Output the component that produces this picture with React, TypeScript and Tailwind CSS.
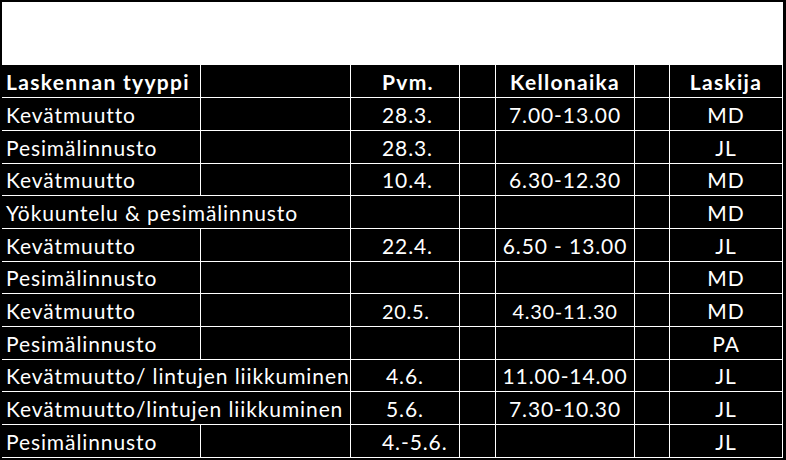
type Row = {
  h: string;
  cells: string[];
  span?: boolean;
  bold?: boolean;
  small?: boolean;
  pvmPad?: string;
};

const rows: Row[] = [
  { h: "h-[33px]", cells: ["Laskennan tyyppi", "Pvm.", "Kellonaika", "Laskija"], bold: true },
  { h: "h-[33px]", cells: ["Kevätmuutto", "28.3.", "7.00-13.00", "MD"] },
  { h: "h-[33px]", cells: ["Pesimälinnusto", "28.3.", "", "JL"] },
  { h: "h-[32px]", cells: ["Kevätmuutto", "10.4.", "6.30-12.30", "MD"] },
  { h: "h-[33px]", cells: ["Yökuuntelu & pesimälinnusto", "", "", "MD"], span: true },
  { h: "h-[33px]", cells: ["Kevätmuutto", "22.4.", "6.50 - 13.00", "JL"] },
  { h: "h-[32px]", cells: ["Pesimälinnusto", "", "", "MD"] },
  { h: "h-[33px]", cells: ["Kevätmuutto", "20.5.", "4.30-11.30", "MD"], small: true },
  { h: "h-[33px]", cells: ["Pesimälinnusto", "", "", "PA"] },
  { h: "h-[32px]", cells: ["Kevätmuutto/ lintujen liikkuminen", "4.6.", "11.00-14.00", "JL"], span: true, pvmPad: "pl-[35px]" },
  { h: "h-[33px]", cells: ["Kevätmuutto/lintujen liikkuminen", "5.6.", "7.30-10.30", "JL"], span: true, pvmPad: "pl-[35px]" },
  { h: "h-[33px]", cells: ["Pesimälinnusto", "4.-5.6.", "", "JL"] },
];

const cell = "flex items-end pb-[5px] border-r border-b border-white whitespace-nowrap";

function TableRow({ row }: { row: Row }) {
  const [type, pvm, time, who] = row.cells;
  const weight = row.bold ? "font-bold tracking-[1.3px]" : "font-normal tracking-[0.9px]";
  const small = row.small ? "text-[20px] tracking-[0.7px]" : "";
  return (
    <div className={`flex ${row.h} ${weight}`}>
      <div className={`${cell} w-[199px] pl-[4px] ${row.span ? "border-r-0" : ""}`}>
        <span className="relative">{type}</span>
      </div>
      <div className={`${cell} w-[150px]`} />
      <div className={`${cell} w-[109px] ${row.pvmPad ?? "pl-[31px]"} ${small}`}>{pvm}</div>
      <div className={`${cell} w-[36px]`} />
      <div className={`${cell} w-[139px] justify-center ${small}`}>{time}</div>
      <div className={`${cell} w-[35px]`} />
      <div className={`${cell} w-[113px] justify-center`}>{who}</div>
    </div>
  );
}

export default function App() {
  return (
    <div className="w-[786px] h-[460px] bg-black pt-[2px] pl-[2px] overflow-hidden">
      {/* empty title box */}
      <div className="w-[781px] h-[63px] bg-white" />
      <div className="flex flex-col text-white text-[21px] leading-none font-['Lato',sans-serif]">
        {rows.map((row, i) => (
          <TableRow key={i} row={row} />
        ))}
      </div>
    </div>
  );
}
